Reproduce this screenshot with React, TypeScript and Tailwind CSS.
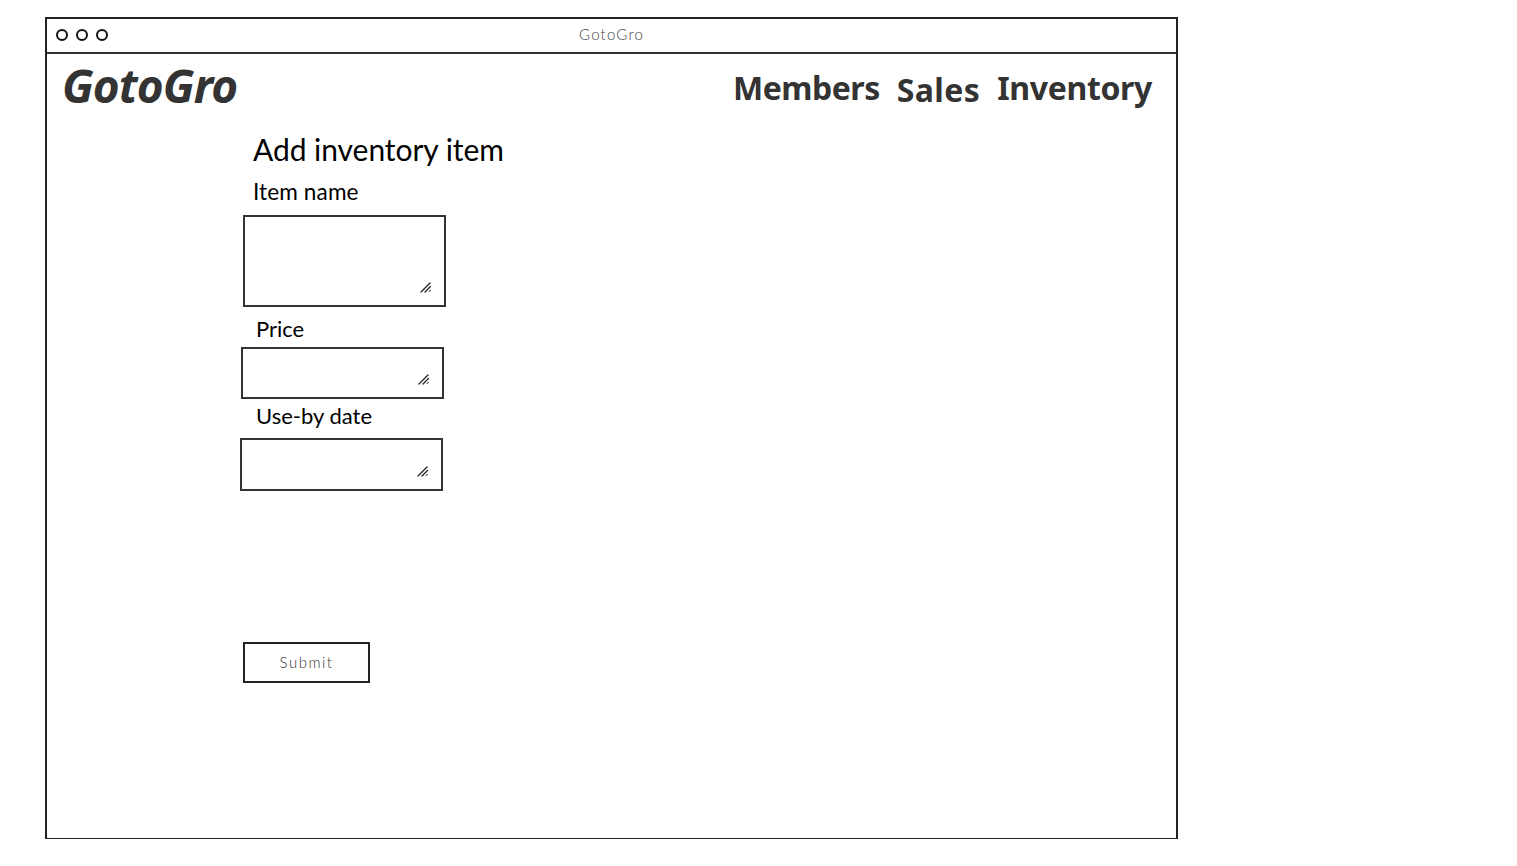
const fieldBorder = 'relative border-2 border-[#333] bg-white';

function ResizeGrip() {
  return (
    <svg className="absolute bottom-[12px] right-[12px]" width="12" height="12" viewBox="0 0 12 12" fill="none" stroke="#222" strokeLinecap="round">
      <path d="M1 11 L10 2" strokeWidth="1.3" />
      <path d="M5 11 L10.5 5.5" strokeWidth="1.2" />
      <path d="M9 10.5 L10.5 9.5" strokeWidth="1" />
    </svg>
  );
}

function WindowDot() {
  return <span className="block w-[12px] h-[12px] rounded-full border-2 border-[#111]" />;
}

export default function App() {
  return (
    <div className="w-[1517px] h-[866px] overflow-hidden bg-white pt-[17px] pl-[45px] font-['Lato',sans-serif] text-black">
      <div className="w-[1133px] h-[822px] border-2 border-[#222] border-b-[1.5px] flex flex-col">
        {/* title bar */}
        <div className="h-[35px] shrink-0 border-b-2 border-[#333] flex items-center pl-[9px] pb-[2px] relative">
          <div className="flex gap-[8px]">
            <WindowDot />
            <WindowDot />
            <WindowDot />
          </div>
          <span className="absolute left-[532px] top-[5px] text-[15px] leading-[20px] text-[#444] font-light tracking-[1.2px]">
            GotoGro
          </span>
        </div>

        {/* header */}
        <div className="h-[68px] shrink-0 flex items-start justify-between pl-[15px] pr-[24px] font-['Noto_Sans',sans-serif] font-bold text-[#333]">
          <span className="text-[46px] leading-[58px] italic tracking-[-0.9px] mt-[2px]">GotoGro</span>
          <nav className="flex text-[32px] leading-[44px] mt-[12px]">
            <span className="tracking-[-0.5px]">Members</span>
            <span className="ml-[17px] mt-[2px] tracking-[0.4px]">Sales</span>
            <span className="ml-[17px] tracking-[-0.35px]">Inventory</span>
          </nav>
        </div>

        {/* form */}
        <div className="flex flex-col items-start pl-[193px] grow">
          <h1 className="pl-[13px] text-[30px] leading-[38px] font-normal mt-[8px] tracking-[-0.05px]">Add inventory item</h1>
          <label className="pl-[13px] text-[22.6px] leading-[28px] mt-[10px] tracking-[0.1px]">Item name</label>
          <div className={`${fieldBorder} w-[203px] h-[92px] ml-[3px] mt-[9px]`}>
            <ResizeGrip />
          </div>
          <label className="pl-[16px] text-[22px] leading-[28px] mt-[8px]">Price</label>
          <div className={`${fieldBorder} w-[203px] h-[52px] ml-[1px] mt-[4px]`}>
            <ResizeGrip />
          </div>
          <label className="pl-[16px] text-[22px] leading-[28px] mt-[3px]">Use-by date</label>
          <div className={`${fieldBorder} w-[203px] h-[53px] mt-[8px]`}>
            <ResizeGrip />
          </div>
          <button className="w-[127px] h-[41px] ml-[3px] mt-[151px] border-2 border-[#222] bg-white text-[15px] font-light text-[#333] tracking-[1.5px]">
            Submit
          </button>
        </div>
      </div>
    </div>
  );
}
